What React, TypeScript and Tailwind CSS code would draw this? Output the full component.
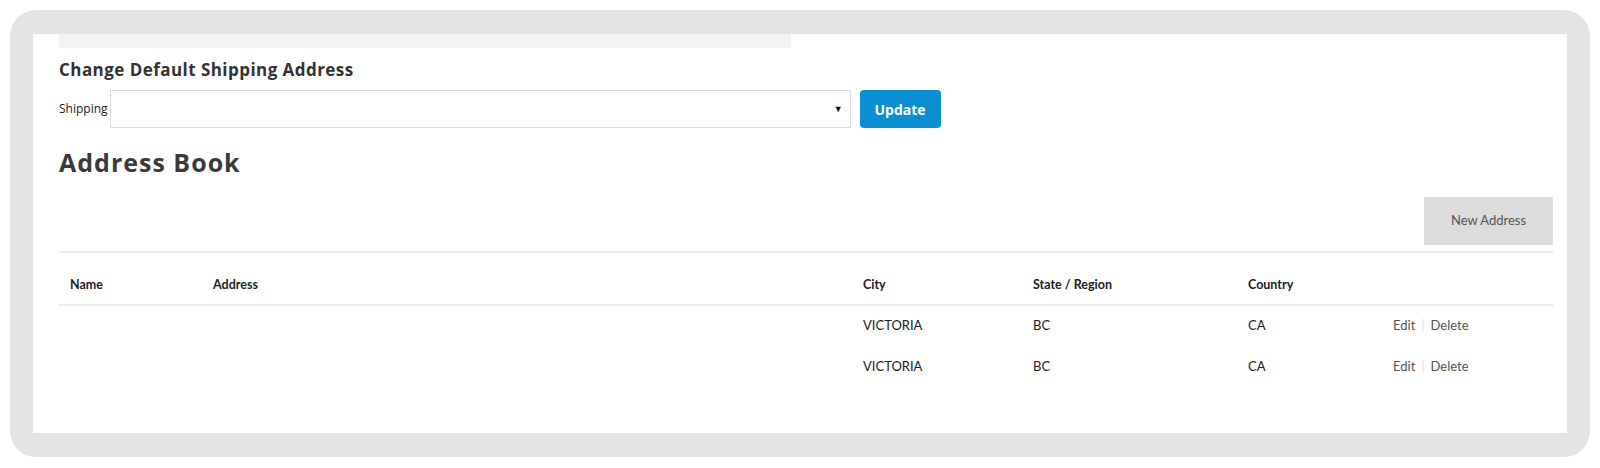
import React from 'react';

/* ---------- DATI ---------- */
interface AddressRow {
  name: string;
  address: string;
  city: string;
  region: string;
  country: string;
}

const rows: AddressRow[] = [
  { name: '', address: '', city: 'VICTORIA', region: 'BC', country: 'CA' },
  { name: '', address: '', city: 'VICTORIA', region: 'BC', country: 'CA' },
];

const lato = { fontFamily: 'Lato, "Open Sans", sans-serif' };
const heading = { fontFamily: '"Open Sans", Lato, sans-serif' };

/* ---------- PAGINA ---------- */
const App = () => {
  return (
    <div className="w-[1600px] h-[468px] bg-white pt-[10px] pl-[10px]">
      <div className="w-[1580px] h-[447px] bg-[#e4e4e4] rounded-[26px] pt-[24px] pl-[23px]">
        <div className="w-[1534px] h-[399px] bg-white pl-[26px] pr-[14px]" style={lato}>
          {/* barra grigia in alto */}
          <div className="w-[732px] h-[14px] bg-[#f3f3f3]" />

          <h2
            className="mt-[10px] text-[17px] leading-[24px] font-bold text-[#333] tracking-[0.45px]"
            style={heading}
          >
            Change Default Shipping Address
          </h2>

          <div className="mt-[8px] flex items-center">
            <label
              className="text-[12px] text-[#222] pr-[2px]"
              style={{ fontFamily: '"Open Sans", sans-serif' }}
            >
              Shipping
            </label>
            <div className="w-[741px] h-[38px] border border-[#dcdcdc] flex items-center justify-end pr-[7px]">
              <span className="text-[9px] text-[#111]">▼</span>
            </div>
            <button
              className="ml-[9px] w-[81px] h-[38px] rounded-[4px] bg-[#0b8fd2] text-white text-[14px] font-bold"
              style={heading}
            >
              Update
            </button>
          </div>

          <h1
            className="mt-[17px] text-[25px] leading-[34px] font-bold text-[#3a3a3a] tracking-[1px]"
            style={heading}
          >
            Address Book
          </h1>

          <div className="w-[1494px]">
            <div className="flex justify-end mt-[18px]">
              <button className="w-[129px] h-[48px] bg-[#dcdcdc] text-[13px] text-[#555]">
                New Address
              </button>
            </div>

            <table className="mt-[6px] w-full table-fixed border-t-2 border-[#ebebeb] text-[13px] text-[#222]">
              <colgroup>
                <col className="w-[143px]" />
                <col className="w-[650px]" />
                <col className="w-[170px]" />
                <col className="w-[215px]" />
                <col className="w-[145px]" />
                <col className="w-[171px]" />
              </colgroup>
              <thead>
                <tr className="h-[53px] border-b-2 border-[#ebebeb] text-[12.5px]">
                  <th className="text-left font-bold pl-[11px] pt-[14px]">Name</th>
                  <th className="text-left font-bold pl-[11px] pt-[14px]">Address</th>
                  <th className="text-left font-bold pl-[11px] pt-[14px]">City</th>
                  <th className="text-left font-bold pl-[11px] pt-[14px]">State / Region</th>
                  <th className="text-left font-bold pl-[11px] pt-[14px]">Country</th>
                  <th />
                </tr>
              </thead>
              <tbody>
                {rows.map((r, i) => (
                  <tr key={i} className="h-[41px]">
                    <td className="pl-[11px]">{r.name}</td>
                    <td className="pl-[11px]">{r.address}</td>
                    <td className="pl-[11px]">{r.city}</td>
                    <td className="pl-[11px]">{r.region}</td>
                    <td className="pl-[11px]">{r.country}</td>
                    <td className="pl-[11px] text-[#555]">
                      Edit<span className="text-[#ddd] mx-[6px]">|</span>Delete
                    </td>
                  </tr>
                ))}
              </tbody>
            </table>
          </div>
        </div>
      </div>
    </div>
  );
};

export default App;
